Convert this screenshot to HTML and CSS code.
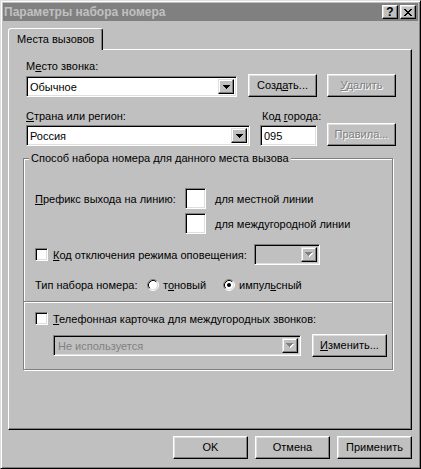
FILE: index.html
```html
<!DOCTYPE html>
<html lang="ru">
<head>
<meta charset="utf-8">
<title>Параметры набора номера</title>
<link rel="stylesheet" href="styles.css">
</head>
<body>
<div class="window">
  <div class="titlebar">
    <span class="title">Параметры набора номера</span>
    <span class="cap-btn cap-help">?</span>
    <span class="cap-btn cap-close"><svg width="8" height="7" viewBox="0 0 8 7" shape-rendering="crispEdges"><path d="M0 0h2v1H0zM6 0h2v1H6zM1 1h2v1H1zM5 1h2v1H5zM2 2h4v1H2zM3 3h2v1H3zM2 4h4v1H2zM1 5h2v1H1zM5 5h2v1H5zM0 6h2v1H0zM6 6h2v1H6z" fill="#000"/></svg></span>
  </div>
  <div class="body">
    <div class="tabs"><div class="tab">Места вызовов</div></div>
    <div class="panel">
      <div class="lbl">М<u>е</u>сто звонка:</div>
      <div class="row row-place">
        <div class="combo combo-place">
          <span class="combo-text">Обычное</span>
          <span class="drop"><svg width="7" height="4" viewBox="0 0 7 4" shape-rendering="crispEdges"><path d="M0 0h7v1H0zM1 1h5v1H1zM2 2h3v1H2zM3 3h1v1H3z" fill="#000"/></svg></span>
        </div>
        <div class="btn btn-create">Созд<u>а</u>ть...</div>
        <div class="btn btn-side disabled"><u>У</u>далить</div>
      </div>
      <div class="row row-labels">
        <div class="lbl lbl-country"><u>С</u>трана или регион:</div>
        <div class="lbl">Код <u>г</u>орода:</div>
      </div>
      <div class="row row-country">
        <div class="combo combo-country">
          <span class="combo-text">Россия</span>
          <span class="drop"><svg width="7" height="4" viewBox="0 0 7 4" shape-rendering="crispEdges"><path d="M0 0h7v1H0zM1 1h5v1H1zM2 2h3v1H2zM3 3h1v1H3z" fill="#000"/></svg></span>
        </div>
        <div class="field field-code">095</div>
        <div class="btn btn-side disabled">Правила...</div>
      </div>

      <div class="group">
        <div class="legend">Способ набора номера для данного места вызова</div>

        <div class="row prefix-row">
          <div class="prefix-label"><u>П</u>рефикс выхода на линию:</div>
          <div class="field field-small"></div>
          <div class="prefix-text">для местной линии</div>
        </div>
        <div class="row prefix-row prefix-row2">
          <div class="field field-small"></div>
          <div class="prefix-text">для междугородной линии</div>
        </div>

        <div class="row check-row">
          <span class="checkbox"></span>
          <span class="check-label check-label-fixed"><u>К</u>од отключения режима оповещения:</span>
          <div class="combo combo-disabled combo-mute">
            <span class="combo-text"></span>
            <span class="drop drop-disabled"><svg width="8" height="5" viewBox="0 0 8 5" shape-rendering="crispEdges"><path d="M1 1h7v1H1zM2 2h5v1H2zM3 3h3v1H3zM4 4h1v1H4z" fill="#fff"/><path d="M0 0h7v1H0zM1 1h5v1H1zM2 2h3v1H2zM3 3h1v1H3z" fill="#808080"/></svg></span>
          </div>
        </div>

        <div class="row radio-row">
          <span class="radio-caption">Тип набора номера:</span>
          <span class="radio-opt radio-opt-first">
            <svg class="radio" width="12" height="12" viewBox="0 0 12 12">
              <circle cx="6" cy="6" r="4.5" fill="#fff"/>
              <path d="M2.11 9.89A5.5 5.5 0 0 1 9.89 2.11" fill="none" stroke="#808080"/>
              <path d="M9.89 2.11A5.5 5.5 0 0 1 2.11 9.89" fill="none" stroke="#fff"/>
              <path d="M2.82 9.18A4.5 4.5 0 0 1 9.18 2.82" fill="none" stroke="#000"/>
              <path d="M9.18 2.82A4.5 4.5 0 0 1 2.82 9.18" fill="none" stroke="#dfdfdf"/>
            </svg>
            <span class="radio-label">т<u>о</u>новый</span>
          </span>
          <span class="radio-opt">
            <svg class="radio" width="12" height="12" viewBox="0 0 12 12">
              <circle cx="6" cy="6" r="4.5" fill="#fff"/>
              <path d="M2.11 9.89A5.5 5.5 0 0 1 9.89 2.11" fill="none" stroke="#808080"/>
              <path d="M9.89 2.11A5.5 5.5 0 0 1 2.11 9.89" fill="none" stroke="#fff"/>
              <path d="M2.82 9.18A4.5 4.5 0 0 1 9.18 2.82" fill="none" stroke="#000"/>
              <path d="M9.18 2.82A4.5 4.5 0 0 1 2.82 9.18" fill="none" stroke="#dfdfdf"/>
              <circle cx="6" cy="6" r="2" fill="#000"/>
            </svg>
            <span class="radio-label">импул<u>ь</u>сный</span>
          </span>
        </div>

        <div class="separator"></div>

        <div class="row check-row2">
          <span class="checkbox"></span>
          <span class="check-label"><u>Т</u>елефонная карточка для междугородных звонков:</span>
        </div>

        <div class="row card-row">
          <div class="combo combo-disabled combo-card">
            <span class="combo-text">Не используется</span>
            <span class="drop drop-disabled"><svg width="8" height="5" viewBox="0 0 8 5" shape-rendering="crispEdges"><path d="M1 1h7v1H1zM2 2h5v1H2zM3 3h3v1H3zM4 4h1v1H4z" fill="#fff"/><path d="M0 0h7v1H0zM1 1h5v1H1zM2 2h3v1H2zM3 3h1v1H3z" fill="#808080"/></svg></span>
          </div>
          <div class="btn btn-change"><u>И</u>зменить...</div>
        </div>
      </div>
    </div>
    <div class="footer">
      <div class="btn btn-foot">OK</div>
      <div class="btn btn-foot">Отмена</div>
      <div class="btn btn-foot">Применить</div>
    </div>
  </div>
</div>
</body>
</html>
```
FILE: styles.css
```css
* { box-sizing: border-box; }
html, body { margin: 0; padding: 0; }
body {
  background: #c0c0c0;
  font-family: "Liberation Sans", Arial, sans-serif;
  font-size: 11px;
  color: #000;
}
u { text-decoration: underline; text-underline-offset: 1px; }

.window {
  width: 421px;
  height: 469px;
  border: 1px solid;
  border-color: #dfdfdf #000 #000 #dfdfdf;
  box-shadow: inset 1px 1px #fff, inset -1px -1px #808080;
  padding: 2px;
  background: #c0c0c0;
  display: flex;
  flex-direction: column;
}

/* title bar */
.titlebar {
  height: 18px;
  background: #808080;
  display: flex;
  align-items: center;
  padding: 0 2px 0 1px;
}
.title {
  flex: 1;
  color: #c0c0c0;
  font-weight: bold;
  font-size: 12px;
  white-space: nowrap;
}
.cap-btn {
  width: 16px;
  height: 14px;
  background: #c0c0c0;
  border: 1px solid;
  border-color: #fff #000 #000 #fff;
  box-shadow: inset -1px -1px #808080, inset 1px 1px #dfdfdf;
  display: flex;
  align-items: center;
  justify-content: center;
}
.cap-help {
  font-weight: bold;
  font-size: 12px;
  line-height: 12px;
}
.cap-close { margin-left: 2px; }

/* body */
.body {
  flex: 1;
  padding: 7px 6px 0 5px;
  display: flex;
  flex-direction: column;
}
.tabs {
  display: flex;
  height: 22px;
  margin-bottom: -1px;
  position: relative;
  z-index: 1;
}
.tab {
  width: 95px;
  height: 22px;
  padding-left: 8px;
  border: 1px solid;
  border-bottom: none;
  border-color: #fff #000 transparent #fff;
  border-radius: 3px 3px 0 0;
  box-shadow: inset -1px 0 #808080;
  background: #c0c0c0;
  line-height: 21px;
  white-space: nowrap;
}
.panel {
  width: 404px;
  height: 381px;
  border: 1px solid;
  border-color: #fff #000 #000 #fff;
  box-shadow: inset -1px -1px #808080;
  padding: 10px 0 0 17px;
}

.row { display: flex; }
.lbl { height: 13px; line-height: 13px; white-space: nowrap; }

/* 3D primitives */
.btn {
  height: 23px;
  border: 1px solid;
  border-color: #fff #000 #000 #fff;
  box-shadow: inset -1px -1px #808080, inset 1px 1px #dfdfdf;
  background: #c0c0c0;
  text-align: center;
  line-height: 20px;
  white-space: nowrap;
}
.btn.disabled { color: #808080; text-shadow: 1px 1px #fff; }

.field, .combo, .checkbox {
  border: 1px solid;
  border-color: #808080 #fff #fff #808080;
  box-shadow: inset 1px 1px #000, inset -1px -1px #dfdfdf;
  background: #fff;
}
.field {
  height: 21px;
  padding: 2px 0 0 3px;
  line-height: 16px;
}
.combo {
  height: 21px;
  padding: 2px;
  display: flex;
  align-items: stretch;
}
.combo-text {
  flex: 1;
  padding-left: 1px;
  line-height: 17px;
  white-space: nowrap;
  overflow: hidden;
}
.drop {
  width: 16px;
  border: 1px solid;
  border-color: #dfdfdf #000 #000 #dfdfdf;
  box-shadow: inset -1px -1px #808080, inset 1px 1px #fff;
  background: #c0c0c0;
  display: flex;
  align-items: center;
  justify-content: center;
}
.combo-disabled { background: #c0c0c0; }
.combo-disabled .combo-text { color: #808080; padding-left: 2px; }

/* first rows */
.row-place { margin-top: 1px; height: 23px; align-items: flex-end; }
.combo-place { width: 211px; }
.btn-create { width: 69px; margin-left: 11px; }
.btn-side { width: 69px; margin-left: 10px; }

.row-labels { margin-top: 13px; }
.lbl-country { width: 236px; }

.row-country { height: 23px; align-items: flex-end; }
.combo-country { width: 224px; }
.field-code { width: 57px; margin-left: 10px; }

/* group box */
.group {
  width: 370px;
  margin: 12px 0 0 -3px;
  border: 1px solid #808080;
  box-shadow: inset 1px 1px #fff, 1px 1px #fff;
  padding: 0 0 12px 11px;
}
.legend {
  display: table;
  margin: -7px 0 0 -6px;
  padding: 0 2px;
  background: #c0c0c0;
  line-height: 13px;
  white-space: nowrap;
}

.prefix-row { margin-top: 23px; height: 21px; align-items: center; }
.prefix-row2 { margin-top: 4px; padding-left: 150px; }
.prefix-label { width: 150px; white-space: nowrap; }
.field-small { width: 21px; height: 21px; }
.prefix-text { margin-left: 9px; white-space: nowrap; }

.check-row { margin-top: 10px; height: 21px; align-items: center; }
.checkbox { width: 13px; height: 13px; display: block; flex: none; }
.check-label { margin-left: 5px; white-space: nowrap; }
.check-label-fixed { width: 201px; }
.combo-mute { width: 66px; }

.radio-row { margin-top: 12px; height: 16px; align-items: center; }
.radio-caption { width: 112px; white-space: nowrap; }
.radio-opt { display: flex; align-items: center; }
.radio-opt-first { width: 76px; }
.radio { display: block; flex: none; }
.radio-label { margin-left: 4px; white-space: nowrap; }

.separator {
  margin: 8px 0 0 -11px;
  width: 368px;
  height: 2px;
  border-top: 1px solid #808080;
  border-bottom: 1px solid #fff;
}

.check-row2 { margin-top: 9px; height: 13px; align-items: center; }

.card-row { margin-top: 9px; height: 23px; align-items: center; }
.combo-card { width: 248px; margin-left: 18px; }
.btn-change { width: 75px; margin-left: 11px; }

/* footer */
.footer {
  margin-top: 6px;
  display: flex;
  justify-content: flex-end;
  gap: 7px;
}
.btn-foot { width: 75px; }
```
